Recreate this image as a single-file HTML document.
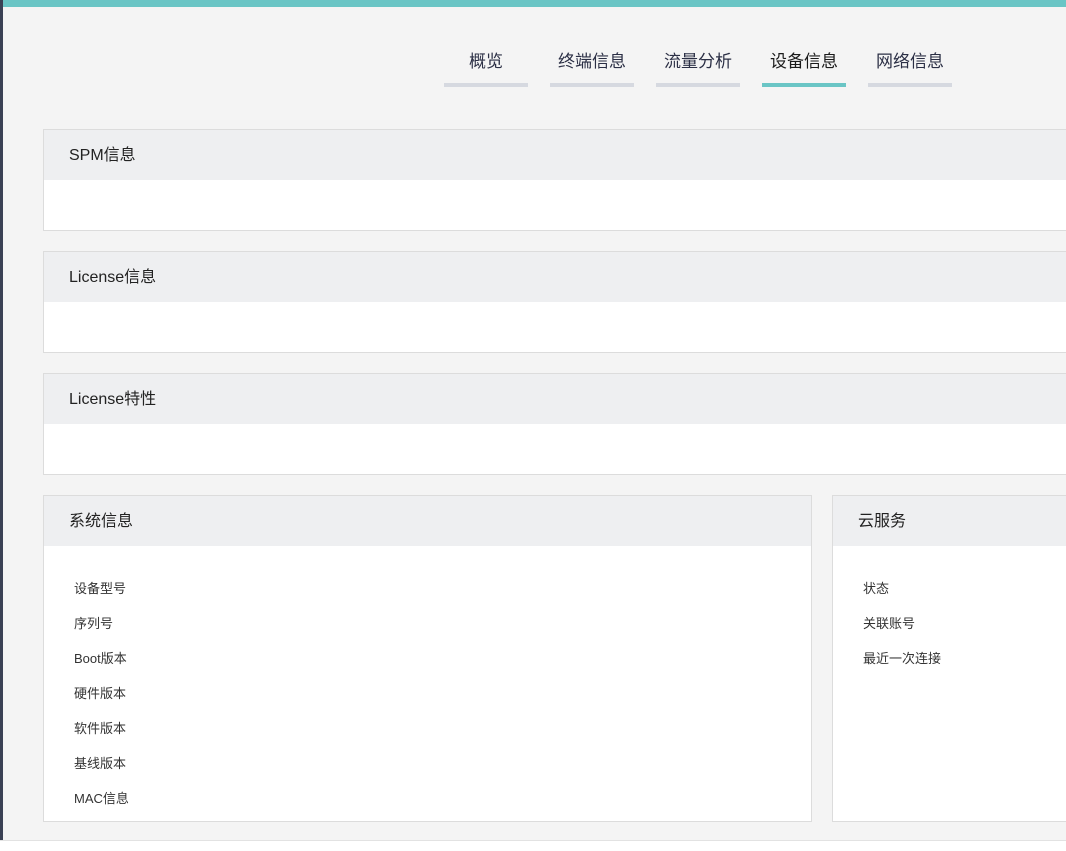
<!DOCTYPE html>
<html><head><meta charset="utf-8"><style>
*{margin:0;padding:0;box-sizing:border-box}
body{width:1066px;height:851px;overflow:hidden;background:#f4f4f4;font-family:"Liberation Sans","Noto Sans CJK SC",sans-serif;position:relative;color:#2b2f3a}
.top{position:absolute;left:0;top:0;width:1066px;height:7px;background:#6ac5c5}
.left{position:absolute;left:0;top:0;width:3px;height:840px;background:#3a4154}
.tab{position:absolute;top:50px;width:84px;height:37px;text-align:center;font-size:17px;line-height:24px;color:#2b2f45;border-bottom:4px solid #d6d9e0}
.tab.on{border-bottom-color:#6ac5c5;color:#1a1a1a}
.panel{position:absolute;background:#fff;border:1px solid #dcdcdc}
.panel .h{height:50px;background:#eeeff1;font-size:16px;line-height:52px;padding-left:25px;color:#222}
.item{font-size:13px;color:#333;position:absolute;left:30px}
.bottom{position:absolute;left:0;top:840px;width:1066px;height:11px;background:#fff;border-top:1px solid #e2e2e2}
</style></head><body>
<div class="top"></div><div class="left"></div>
<div class="tab" style="left:444px">概览</div>
<div class="tab" style="left:550px">终端信息</div>
<div class="tab" style="left:656px">流量分析</div>
<div class="tab on" style="left:762px">设备信息</div>
<div class="tab" style="left:868px">网络信息</div>
<div class="panel" style="left:43px;top:129px;width:1030px;height:102px"><div class="h">SPM信息</div></div>
<div class="panel" style="left:43px;top:251px;width:1030px;height:102px"><div class="h">License信息</div></div>
<div class="panel" style="left:43px;top:373px;width:1030px;height:102px"><div class="h">License特性</div></div>
<div class="panel" style="left:43px;top:495px;width:769px;height:327px"><div class="h">系统信息</div>
<div class="item" style="top:82px">设备型号</div>
<div class="item" style="top:117px">序列号</div>
<div class="item" style="top:152px">Boot版本</div>
<div class="item" style="top:187px">硬件版本</div>
<div class="item" style="top:222px">软件版本</div>
<div class="item" style="top:257px">基线版本</div>
<div class="item" style="top:292px">MAC信息</div>
</div>
<div class="panel" style="left:832px;top:495px;width:250px;height:327px"><div class="h">云服务</div>
<div class="item" style="top:82px">状态</div>
<div class="item" style="top:117px">关联账号</div>
<div class="item" style="top:152px">最近一次连接</div>
</div>
<div class="bottom"></div>
</body></html>
